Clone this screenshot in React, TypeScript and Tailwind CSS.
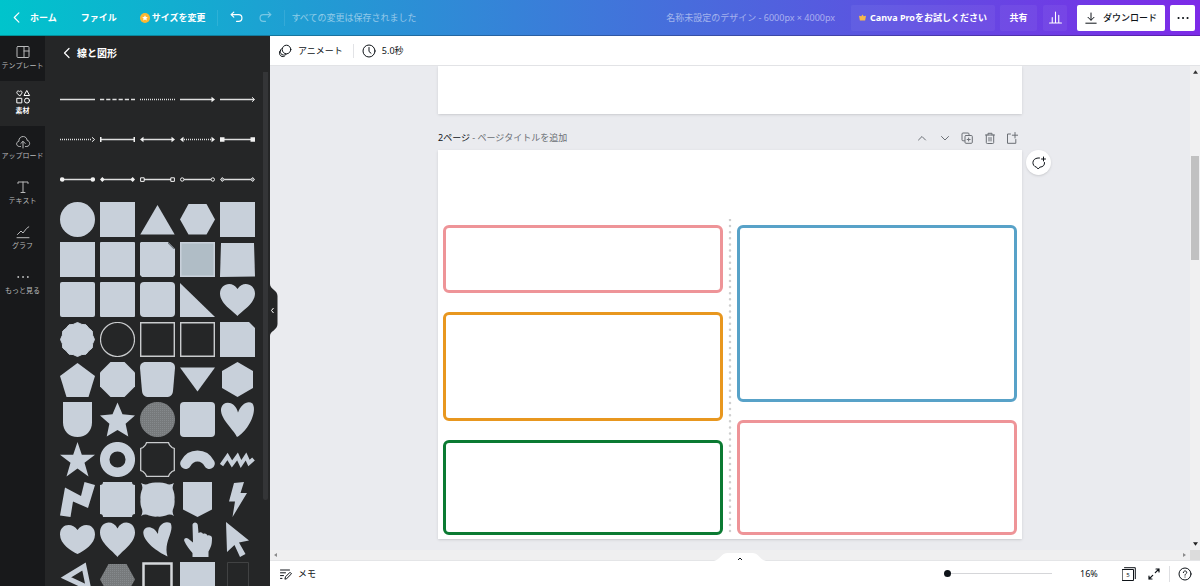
import type { ReactNode } from "react"

const STROKE = {
  fill: "none",
  stroke: "currentColor",
  strokeLinecap: "round",
  strokeLinejoin: "round",
} as const

const NAV = [
  {
    label: "テンプレート",
    icon: (
      <>
        <rect x="2" y="2.5" width="12" height="11" rx="1" />
        <path d="M9 2.5v11M9 7h5" />
      </>
    ),
  },
  {
    label: "素材",
    active: true,
    icon: (
      <>
        <path d="M4.5 6.8 2.2 4.4C1 3 3 .8 4.5 2.7 6 .8 8 3 6.8 4.4z" />
        <path d="M12 1.8 14.6 6.5H9.4z" />
        <rect x="2.2" y="9.3" width="4.6" height="4.6" />
        <circle cx="12" cy="11.6" r="2.5" />
      </>
    ),
  },
  {
    label: "アップロード",
    icon: (
      <>
        <path d="M5.5 12.5H4.3C.9 12.2.8 7.9 3.8 7.4 3.6 1.3 11.6.8 12.2 6.5c3.4.5 3.2 5.7-.4 6h-1.3" />
        <path d="M8 14V7.5M5.8 9.5 8 7.3l2.2 2.2" />
      </>
    ),
  },
  { label: "テキスト", icon: <path d="M3 4.5V3h10v1.5M8 3v10.5M6 13.5h4" /> },
  {
    label: "グラフ",
    icon: <path d="M2 13.7h12M2.5 10.5 6 7l2 2 3.5-4.5 2.3-1.7" />,
  },
  {
    label: "もっと見る",
    icon: <path d="M3.2 8h.1M8 8h.1M12.8 8h.1" strokeWidth="1.8" />,
  },
]

const seg = (x1: number, x2: number, dash?: string) => (
  <path d={`M${x1} 17.5H${x2}`} stroke="#dedede" strokeWidth="1.5" strokeDasharray={dash} />
)

const LINES: { name: string; art: ReactNode }[] = [
  { name: "直線", art: seg(0, 35) },
  { name: "破線", art: seg(0, 35, "4.2 2") },
  { name: "点線", art: seg(0, 35, "1 1") },
  { name: "矢印", art: <>{seg(0, 33)}<path d="M31.5 14.700l3.500 2.800-3.500 2.800z" /></> },
  { name: "細い矢印", art: <>{seg(0, 34)}<path d="M32 15.3l2.6 2.2-2.6 2.2" fill="none" stroke="#ededed" /></> },
  { name: "点線の矢印", art: <>{seg(0, 32, "1 1")}<path d="M32 15.3l2.6 2.2-2.6 2.2" fill="none" stroke="#ededed" /></> },
  { name: "端線", art: <>{seg(1, 34)}<path d="M0 15h1.5v5H0zM33.5 15H35v5h-1.5z" /></> },
  { name: "両矢印", art: <>{seg(2, 33)}<path d="M3.5 14.700 0 17.5l3.500 2.800zM31.5 14.700l3.500 2.800-3.500 2.800z" /></> },
  { name: "点線の両矢印", art: <>{seg(4, 31, "1 1")}<path d="M3.5 14.700 0 17.5l3.500 2.800zM31.5 14.700l3.500 2.800-3.500 2.800z" /></> },
  { name: "四角の端", art: <>{seg(3, 32)}<path d="M0 15.3h4.5v4.5H0zM30.5 15.3H35v4.5h-4.5z" /></> },
  { name: "丸の端", art: <>{seg(2, 33)}<circle cx="2.2" cy="17.5" r="2.3" /><circle cx="32.8" cy="17.5" r="2.3" /></> },
  { name: "ひし形の端", art: <>{seg(2, 33)}<path d="M2.3 15l2.4 2.5-2.4 2.5L0 17.5zM32.7 15l2.3 2.5-2.3 2.5-2.4-2.5z" /></> },
  { name: "白抜き四角の端", art: <>{seg(4, 31)}<path d="M.6 15.8h3.6v3.6H.6zM30.8 15.8h3.6v3.6h-3.6z" fill="none" stroke="#f1f1f1" /></> },
  { name: "白抜き丸の端", art: <>{seg(4, 31)}<g fill="none" stroke="#f1f1f1"><circle cx="2.2" cy="17.5" r="1.7" /><circle cx="32.8" cy="17.5" r="1.7" /></g></> },
  { name: "白抜きひし形の端", art: <>{seg(4, 31)}<path d="M2.3 15.5l2 2-2 2-1.8-2zM32.7 15.5l1.8 2-1.8 2-2-2z" fill="#8a8d90" stroke="#dedede" /></> },
]

const HEART = "M17.500 34C13 29 0 21.500 0 11.500 0 2 12-2 17.500 7 23-2 35 2 35 11.500 35 21.500 22 29 17.500 34z"

const SHAPES: { name: string; art: ReactNode }[] = [
  { name: "円", art: <circle cx="17.5" cy="17.5" r="17.5" /> },
  { name: "正方形", art: <path d="M0 0h35v35H0z" /> },
  { name: "三角形", art: <path d="M17.5 3 34.700 32.500H.3z" /> },
  { name: "六角形", art: <path d="M0 17.5 8.500 2h18L35 17.500 26.500 32.500h-18z" /> },
  { name: "四角", art: <path d="M0 0h35v35H0z" /> },

  { name: "四角 2", art: <path d="M0 0h35v35H0z" /> },
  { name: "角切り", art: <path d="M.5 0h34l.5.5v34l-.5.5H.5l-.5-.5V.5z" /> },
  { name: "折り角", art: <><path d="M1 0h27l7 7v26l-2 2H2l-2-2V1z" /><path d="M28 0v1.500l5.500 5.500H35z" fill="#6d757c" /></> },
  { name: "枠付き四角", art: <><path d="M0 0h35v35H0z" /><path d="M1.500 1.500h32v32h-32z" fill="#b0bdc6" /></> },
  { name: "ゆがみ四角", art: <path d="M1 1h33l1 33.500-35 .5z" /> },

  { name: "角丸", art: <rect width="35" height="35" rx="2" /> },
  { name: "角丸 小", art: <rect width="35" height="35" rx="1" /> },
  { name: "角丸 大", art: <rect width="35" height="35" rx="4" /> },
  { name: "直角三角形", art: <path d="M0 1 35 35H0z" /> },
  { name: "ハート", art: <path d={HEART} /> },

  {
    name: "十二角形",
    art: (
      <path
        d="M17.500.5Q22 3.200 26 2.800 28.500 6.500 32.200 9 32 13.500 34.500 17.500 32 21.500 32.200 26 28.500 28.500 26 32.200 22 31.800 17.500 34.500 13 31.800 9 32.200 6.500 28.500 2.800 26 3 21.500.5 17.500 3 13.500 2.800 9 6.500 6.500 9 2.800 13 3.200 17.500.5z"
        stroke="#c8d0da"
        strokeLinejoin="round"
      />
    ),
  },
  { name: "円の枠", art: <circle cx="17.5" cy="17.5" r="17" fill="none" stroke="#c9cbcd" strokeWidth="1.2" /> },
  { name: "四角の枠", art: <path d="M.7.7h33.600v33.600H.7z" fill="none" stroke="#c9cbcd" strokeWidth="1.4" /> },
  { name: "四角の枠 2", art: <path d="M.7.7h33.600v33.600H.7z" fill="none" stroke="#c9cbcd" strokeWidth="1.4" /> },
  { name: "角落とし", art: <path d="M0 0h29l6 6v29H0z" /> },

  { name: "五角形", art: <path d="M17.500 1 35 14 28.500 35h-22L0 14z" /> },
  { name: "八角形", art: <path d="M10.500 0h14L35 10.500v14L24.500 35h-14L0 24.500v-14z" /> },
  { name: "台形", art: <path d="M6 0h23c4.500 0 6 2.500 6 6l-2 23c-.5 4-2.500 6-7 6H9c-4.500 0-6.500-2-7-6L0 6c0-3.500 1.500-6 6-6z" /> },
  { name: "逆三角形", art: <path d="M0 5.500h35L17.500 29.500z" /> },
  { name: "縦六角形", art: <path d="M17.500 0 33 9v17l-15.500 9L2 26V9z" /> },

  { name: "盾", art: <path d="M3 0h29v20.500C32 29 26 35 17.500 35S3 29 3 20.500z" /> },
  { name: "星", art: <path d="M17.500.5 22.500 12.200 35 13.500 25.600 21.800 28.300 34.500 17.500 28 6.700 34.500 9.400 21.800 0 13.500 12.500 12.200z" /> },
  { name: "網点の円", art: <circle cx="17.5" cy="17.5" r="17.500" fill="url(#halftone)" /> },
  { name: "角丸四角形", art: <rect width="35" height="35" rx="4" /> },
  { name: "傾いたハート", art: <path d="M17 35C14 28-1 16 1.200 6 3-1.500 15-1.500 18 10.500 21 2 28-2 32.500 1.500 38 10 27 30 17 35z" /> },

  { name: "五芒星", art: <path d="M17.500 0 21.800 12.800H35L24.500 20.800 28.500 34.500 17.500 26.500 6.500 34.500 10.500 20.800 0 12.800H13.200z" /> },
  { name: "ドーナツ", art: <circle cx="17.5" cy="17.5" r="12.8" fill="none" stroke="#c8d0da" strokeWidth="9.5" /> },
  { name: "八角の枠", art: <path d="M6.500.7h22L29.500 3l2.500 2.500 2.300 1v22l-2.300 1-2.500 2.500-1 2.300h-22l-1-2.300L3 29.500l-2.300-1v-22l2.300-1L5.500 3z" fill="none" stroke="#c9cbcd" strokeWidth="1.3" /> },
  { name: "アーチ", art: <path d="M5.700 21.500C11 11.500 24 11.500 29.300 21.500" fill="none" stroke="#c8d0da" strokeWidth="11" strokeLinecap="round" /> },
  { name: "ジグザグ", art: <path d="M1.500 23 7.500 14.500 12 22 17.500 14.500 21 22 26 14.500 29 21 33.500 17" fill="none" stroke="#c8d0da" strokeWidth="4" /> },

  { name: "稲妻の帯", art: <path d="M5 5.500 21 14 24.500 0 35 3 28 26 13 19.500 10.500 35 0 33.500z" /> },
  { name: "プレート", art: <path d="M3 0h29c0 2 1 3 3 3v29c-2 0-3 1-3 3H3c0-2-1-3-3-3V3c2 0 3-1 3-3z" /> },
  {
    name: "飾り枠",
    art: <path d="M1 1q4 2.500 8 .5 4.200-1.500 8.500-1 4.300-.5 8.500 1 4 2 8-.5-2.500 4-.5 8 1.500 4.200 1 8.500.5 4.300-1 8.500-2 4 .5 8-4-2.500-8-.5-4.200 1.500-8.500 1-4.300.5-8.500-1-4-2-8 .5 2.500-4 .5-8-1.500-4.200-1-8.500-.5-4.300 1-8.500 2-4-.5-8z" />,
  },
  { name: "バナー", art: <path d="M3 0h29v27.500L17.500 35 3 27.500z" /> },
  { name: "稲妻", art: <path d="M14 1 24 0 20.500 11H27L12.500 35 15 19.500H9z" /> },

  { name: "横長ハート", art: <path d="M17.500 32C11 29 0 22 0 12.500 0 2 12 0 17.500 8 23 0 35 2 35 12.500 35 22 24 29 17.500 32z" /> },
  { name: "ハート 2", art: <path d="M17.500 35C13 29 0 21 0 10.500 0-1 13-3 17.500 6.500 22-3 35-1 35 10.500 35 21 22 29 17.500 35z" /> },
  { name: "ハート 3", art: <path d="M27.500 34.500C18 30 3 20 3.300 10 4 4 13 2.500 18 12 18 2 25-1.500 30.500 1 35 9 23 20 27.500 34.500z" /> },
  { name: "指", art: <path d="M12.500 3c0-3.500 5-3.500 5.300 0l.7 8c2-1.500 4-.5 4.500 1 2-1 4 0 4.200 1.500 2-.8 4.800.3 4.800 2.500 0 7-1 9-3.500 13.500V35H12.500v-4C10 28 6 23 4.300 19c-.8-2.500 1.700-4 3.700-2.500l5 4z" /> },
  { name: "カーソル", art: <path d="M6 0 29 18.500 19 20.500 25.500 32 20 35 14.500 23 7 30z" /> },

  { name: "三角の枠", art: <path d="M6 15.500 24 4.500 28.500 26z" fill="none" stroke="#c8d0da" strokeWidth="5" /> },
  { name: "網点の六角形", art: <path d="M0 17.500 8.500 2h18L35 17.500 26.500 32.500h-18z" fill="url(#halftone)" /> },
  { name: "太枠", art: <path d="M3.500 1.500h28v33h-28z" fill="none" stroke="#d5d8db" strokeWidth="2.500" /> },
  { name: "四角 3", art: <path d="M0 0h35v35H0z" /> },
  { name: "細枠", art: <path d="M7.500.5h21v34h-21z" fill="none" stroke="#414243" /> },
]

const PAGE_TOOLS = [
  { name: "上へ移動", icon: <path d="M2.500 8 6 4.500 9.500 8" /> },
  { name: "下へ移動", icon: <path d="M2.500 4.500 6 8l3.500-3.500" /> },
  {
    name: "ページを複製",
    icon: (
      <>
        <path d="M3.500 8.800h-1.500a1 1 0 0 1-1-1V2a1 1 0 0 1 1-1h5a1 1 0 0 1 1 1v1" />
        <rect x="4" y="3.500" width="7.300" height="7.800" rx="1" />
        <path d="M7.650 6v3M6.150 7.500h3" />
      </>
    ),
  },
  {
    name: "ページを削除",
    icon: <path d="M1.500 3h9M4 3V1.300h4V3M2.300 3v7.500a1 1 0 0 0 1 1h5.400a1 1 0 0 0 1-1V3M5 5.500v3.500M7 5.500v3.500" />,
  },
  { name: "ページを追加", icon: <path d="M4.500 2h-3v9.300h8.300V7.500M9 .5v5.500M6.300 3.200h5.500" /> },
]

function ToolIcon({ children, className = "size-3" }: { children: ReactNode; className?: string }) {
  return (
    <svg viewBox="0 0 12 12" className={className} {...STROKE} strokeWidth="1">
      {children}
    </svg>
  )
}

function Header() {
  return (
    <header className="flex h-9 shrink-0 items-center border-b border-black/25 bg-[linear-gradient(90deg,#00c4cc,#3f77da,#7d2ae8)] bg-origin-border pr-[5px] pl-3 text-[9px] font-bold text-white">
      <a href="#home" className="flex items-center gap-[7px]">
        <ToolIcon className="size-[11px]">
          <path d="M7.500 1 2.500 6l5 5" strokeWidth="1.300" />
        </ToolIcon>
        ホーム
      </a>
      <button className="ml-6">ファイル</button>
      <button className="ml-[23px] flex items-center gap-0.5">
        <svg viewBox="0 0 10 10" className="size-[10px]">
          <circle cx="5" cy="5" r="5" fill="#fcb731" />
          <path d="M5 2.200 5.900 4 7.800 4.200 6.400 5.500 6.800 7.400 5 6.500 3.200 7.400 3.600 5.500 2.200 4.200 4.100 4z" fill="#fff" />
        </svg>
        サイズを変更
      </button>
      <span className="ml-3 h-4 w-px bg-white/10" />
      <button aria-label="元に戻す" className="ml-3">
        <ToolIcon className="size-[13px]">
          <path d="M3.500 1 1 3.300l2.500 2.300M1 3.300h7c4 0 4 6.200 0 6.200H6" strokeWidth="1.100" />
        </ToolIcon>
      </button>
      <button aria-label="やり直す" className="ml-4 opacity-40">
        <ToolIcon className="size-[13px]">
          <path d="M8.500 1 11 3.300 8.500 5.600M11 3.300H4c-4 0-4 6.200 0 6.200h2" strokeWidth="1.100" />
        </ToolIcon>
      </button>
      <span className="ml-3 h-4 w-px bg-white/10" />
      <span className="ml-1.5 font-normal whitespace-nowrap text-white/50">すべての変更は保存されました</span>
      <span className="ml-auto font-normal whitespace-nowrap text-white/50">名称未設定のデザイン - 6000px × 4000px</span>
      <button className="ml-4 flex h-[26px] items-center gap-1 rounded-xs bg-white/5 px-2 whitespace-nowrap">
        <svg viewBox="0 0 8 8" className="size-[7px]" fill="#f7b84b">
          <path d="M4 .5 5.400 2.700 8 2 7 7.500H1L0 2l2.600.7z" />
        </svg>
        Canva Proをお試しください
      </button>
      <button className="ml-[5px] h-[26px] w-[37px] rounded-xs bg-white/5">共有</button>
      <button aria-label="統計" className="ml-[6px] flex h-[26px] w-6 items-center justify-center rounded-xs bg-white/5">
        <ToolIcon className="size-[13px]">
          <path d="M.5 11h11M3 11V6M6 11V1M9 11V4" />
        </ToolIcon>
      </button>
      <button className="ml-2.5 flex h-[26px] w-22 items-center justify-center gap-1.5 rounded-xs bg-white font-medium whitespace-nowrap text-[#0e1318]">
        <ToolIcon>
          <path d="M6 1v7M3 5.300l3 3 3-3M.8 11.200h10.400" />
        </ToolIcon>
        ダウンロード
      </button>
      <button aria-label="その他" className="ml-[5px] flex h-[26px] w-[25px] items-center justify-center rounded-xs bg-white text-[#0e1318]">
        <ToolIcon>
          <path d="M1.500 6h.1M6 6h.1M10.500 6h.1" strokeWidth="2" />
        </ToolIcon>
      </button>
    </header>
  )
}

function SideNav() {
  return (
    <nav className="flex w-[45px] shrink-0 flex-col bg-[#252627]">
      {NAV.map((item) => (
        <button
          key={item.label}
          className={
            item.active
              ? "flex h-[45px] shrink-0 flex-col items-center justify-center gap-0.5 pb-[3px] text-[7px] leading-2 font-bold whitespace-nowrap text-white"
              : "flex h-[45px] shrink-0 flex-col items-center justify-center gap-0.5 bg-[#18191b] pb-[3px] text-[7px] leading-2 whitespace-nowrap text-[#b9babb]"
          }
        >
          <svg viewBox="0 0 16 16" className="size-4" {...STROKE}>
            {item.icon}
          </svg>
          {item.label}
        </button>
      ))}
      <div className="flex-1 bg-[#18191b]" />
    </nav>
  )
}

function ShapePanel() {
  return (
    <aside className="relative flex w-[225px] shrink-0 flex-col bg-[#252627] text-white">
      <h2 className="mb-0.5 flex h-[34px] shrink-0 items-center pl-4 text-[10px] font-bold">
        <button className="flex items-center gap-1">
          <ToolIcon>
            <path d="M8 1.500 3.500 6 8 10.500" strokeWidth="1.200" />
          </ToolIcon>
          線と図形
        </button>
      </h2>
      <div className="flex min-h-0 flex-1 justify-between overflow-hidden">
        <div className="grid grid-cols-5 content-start gap-[5px] pt-2.5 pl-[15px]">
          {LINES.map((l) => (
            <button key={l.name} aria-label={l.name}>
              <svg viewBox="0 0 35 35" className="size-[35px]" fill="#f1f1f1">
                {l.art}
              </svg>
            </button>
          ))}
          {SHAPES.map((s) => (
            <button key={s.name} aria-label={s.name}>
              <svg viewBox="0 0 35 35" className="size-[35px]" fill="#c8d0da">
                {s.art}
              </svg>
            </button>
          ))}
        </div>
        <div className="mr-0.5 h-5/6 w-[5px] rounded-b-full bg-[#343537]" />
      </div>
      <svg className="absolute size-0">
        <pattern id="halftone" width="2" height="2" patternUnits="userSpaceOnUse">
          <rect width="2" height="2" fill="#777a7c" />
          <rect width="1" height="1" fill="#85898c" />
        </pattern>
      </svg>
      {/* Collapse handle sits over the canvas edge */}
      <button aria-label="パネルを閉じる" className="absolute top-[248px] left-full z-10">
        <svg viewBox="0 0 8 52" className="h-13 w-2">
          <path d="M0 0c0 5 7.500 6 7.500 12v28c0 6-7.500 7-7.500 12z" fill="#252627" />
          <path d="M3.500 24 1.500 26.500l2 2.500" fill="none" stroke="#fff" />
        </svg>
      </button>
    </aside>
  )
}

function DesignPage() {
  return (
    <div className="relative flex h-[389px] gap-[5px] bg-white px-[5px] pt-[75px] shadow-sm">
      <div className="flex flex-1 flex-col gap-[19px]">
        <div className="h-17 rounded-md border-3 border-[#ee9498]" />
        <div className="h-[109px] rounded-md border-3 border-[#e8971f]" />
        <div className="h-[95px] rounded-md border-3 border-[#0b7a32]" />
      </div>
      <svg className="-mt-1.5 h-[316px] w-1">
        <path d="M2 1V316" stroke="#cfcfcf" strokeWidth="2.500" strokeDasharray="0 6.100" strokeLinecap="round" />
      </svg>
      <div className="flex flex-1 flex-col gap-[18px]">
        <div className="h-[177px] rounded-md border-3 border-[#58a2c8]" />
        <div className="h-[115px] rounded-md border-3 border-[#ee9498]" />
      </div>
      <button
        aria-label="コメントを追加"
        className="absolute top-0 left-full ml-1 flex size-[25px] items-center justify-center rounded-full bg-white text-[#0e1318] shadow"
      >
        <svg viewBox="0 0 14 14" className="size-3.5" {...STROKE}>
          <path d="M7.500 2H6C-.5 2.500-.5 10 4.500 11.200L6.200 13l1.600-1.800c3.500-.3 5-2.200 4.700-4.700M11.500 1v4M9.500 3h4" />
        </svg>
      </button>
    </div>
  )
}

function Canvas() {
  return (
    <div className="flex min-h-0 flex-1">
      <div className="min-w-0 flex-1 overflow-hidden bg-[#eaebef]">
        <div className="mx-auto max-w-[584px]">
          <div className="h-12 bg-white shadow-sm" />
          <div className="flex h-[36px] items-center justify-between pt-3">
            <h3 className="text-[9px] leading-3 whitespace-nowrap text-[#6b6f75]">
              <span className="text-[#0e1318]">2ページ</span> - ページタイトルを追加
            </h3>
            <div className="mr-1 flex w-[102px] justify-between text-[#6b6f75]">
              {PAGE_TOOLS.map((t) => (
                <button key={t.name} aria-label={t.name}>
                  <ToolIcon>{t.icon}</ToolIcon>
                </button>
              ))}
            </div>
          </div>
          <DesignPage />
        </div>
      </div>
      {/* Vertical scrollbar */}
      <div className="flex w-2.5 flex-col items-center bg-[#f0f0f1] py-1">
        <svg viewBox="0 0 6 4" className="mb-[82px] h-1 w-[5px]" fill="#333">
          <path d="M0 4 3 0l3 4z" />
        </svg>
        <div className="h-[104px] w-2 bg-[#c1c1c1]" />
        <svg viewBox="0 0 6 4" className="mt-auto h-1 w-[5px]" fill="#222">
          <path d="M0 0l3 4 3-4z" />
        </svg>
      </div>
    </div>
  )
}

function Footer() {
  return (
    <footer className="flex h-[25px] shrink-0 items-center bg-white pr-2 pl-2.5 text-[9px] text-[#0e1318]">
      <button className="flex items-center gap-1.5">
        <ToolIcon>
          <path d="M.5 2h9M.5 4.800h5M.5 7.600h3M.5 10.400h1.500M5 10.800l.5-2L10 4.300l1.500 1.500L7 10.300z" />
        </ToolIcon>
        メモ
      </button>
      <input
        type="range"
        aria-label="ズーム"
        min={10}
        max={500}
        defaultValue={10}
        className="ml-auto h-2 w-[108px] appearance-none bg-transparent [&::-webkit-slider-runnable-track]:h-px [&::-webkit-slider-runnable-track]:bg-[#d5d6d9] [&::-webkit-slider-thumb]:-mt-[3px] [&::-webkit-slider-thumb]:size-[7px] [&::-webkit-slider-thumb]:appearance-none [&::-webkit-slider-thumb]:rounded-full [&::-webkit-slider-thumb]:bg-[#0e1318]"
      />
      <span className="ml-7 w-5">16%</span>
      <button aria-label="ページ一覧" className="ml-[22px]">
        <svg viewBox="0 0 14 14" className="size-3.5" {...STROKE}>
          <rect x=".5" y="2.500" width="11" height="11" />
          <path d="M2.500.7h10.800v11" />
          <text x="6" y="10.200" textAnchor="middle" fontSize="6" fill="currentColor" stroke="none">
            5
          </text>
        </svg>
      </button>
      <button aria-label="全画面表示" className="ml-3">
        <ToolIcon>
          <path d="M7.300 4.700 11 1M8 1h3v3M4.700 7.300 1 11M1 8v3h3" strokeWidth="1.200" />
        </ToolIcon>
      </button>
      <span className="ml-[9px] h-4 w-px bg-[#dedfe2]" />
      <button aria-label="ヘルプ" className="ml-2">
        <svg viewBox="0 0 14 14" className="size-3.5" {...STROKE}>
          <circle cx="7" cy="7" r="6" />
          <path d="M5.300 5.600c0-2.300 3.600-2.200 3.400 0C8.600 6.800 7 6.700 7 8.200M7 10v.1" />
        </svg>
      </button>
    </footer>
  )
}

export default function App() {
  return (
    <div className="flex h-screen flex-col overflow-hidden bg-white font-['Noto_Sans','Noto_Sans_CJK_JP',sans-serif]">
      <Header />
      <div className="flex min-h-0 flex-1">
        <SideNav />
        <ShapePanel />
        <main className="flex min-w-0 flex-1 flex-col">
          <div className="flex h-[30px] shrink-0 items-center border-b border-[#e2e3e6] pl-2 text-[9px] text-[#0e1318]">
            <button className="flex items-center gap-1.5">
              <svg viewBox="0 0 14 14" className="size-3.5" {...STROKE}>
                <circle cx="8.500" cy="5.500" r="4.300" />
                <path d="M3.300 4.800c-3 3.500.5 8 4.800 5.800M1.800 7.200c-1.500 3 1 6.500 4.500 5.200" />
              </svg>
              アニメート
            </button>
            <span className="ml-2.5 h-3.5 w-px bg-[#e2e3e6]" />
            <button className="ml-2 flex items-center gap-1.5">
              <svg viewBox="0 0 14 14" className="size-3.5" {...STROKE}>
                <circle cx="7" cy="7" r="6" />
                <path d="M7 3.500V7.500l2 1.700" />
              </svg>
              5.0秒
            </button>
          </div>
          <Canvas />
          {/* Horizontal scrollbar with the page list tab over it */}
          <div className="relative flex h-[11px] shrink-0 items-center justify-between border-b border-[#e4e5e7] bg-[#efeff0] pl-1">
            <svg viewBox="0 0 3 4" className="h-1 w-[3px]" fill="#8b8b8b">
              <path d="M3 0 0 2l3 2z" />
            </svg>
            <div className="flex h-full items-center gap-1">
              <svg viewBox="0 0 3 4" className="h-1 w-[3px]" fill="#8b8b8b">
                <path d="M0 0l3 2-3 2z" />
              </svg>
              <div className="h-full w-2.5 bg-[#dcdcdc]" />
            </div>
            <div className="absolute inset-x-0 -bottom-px flex justify-center pl-2.5">
              <button aria-label="ページを表示">
                <svg viewBox="0 0 52 9" className="h-[9px] w-[52px]">
                  <path d="M0 9C6 8 7 1 14 1h24c7 0 8 7 14 8z" fill="#fff" />
                  <path d="M24 8 26 6l2 2" fill="none" stroke="#0e1318" />
                </svg>
              </button>
            </div>
          </div>
          <Footer />
        </main>
      </div>
    </div>
  )
}
